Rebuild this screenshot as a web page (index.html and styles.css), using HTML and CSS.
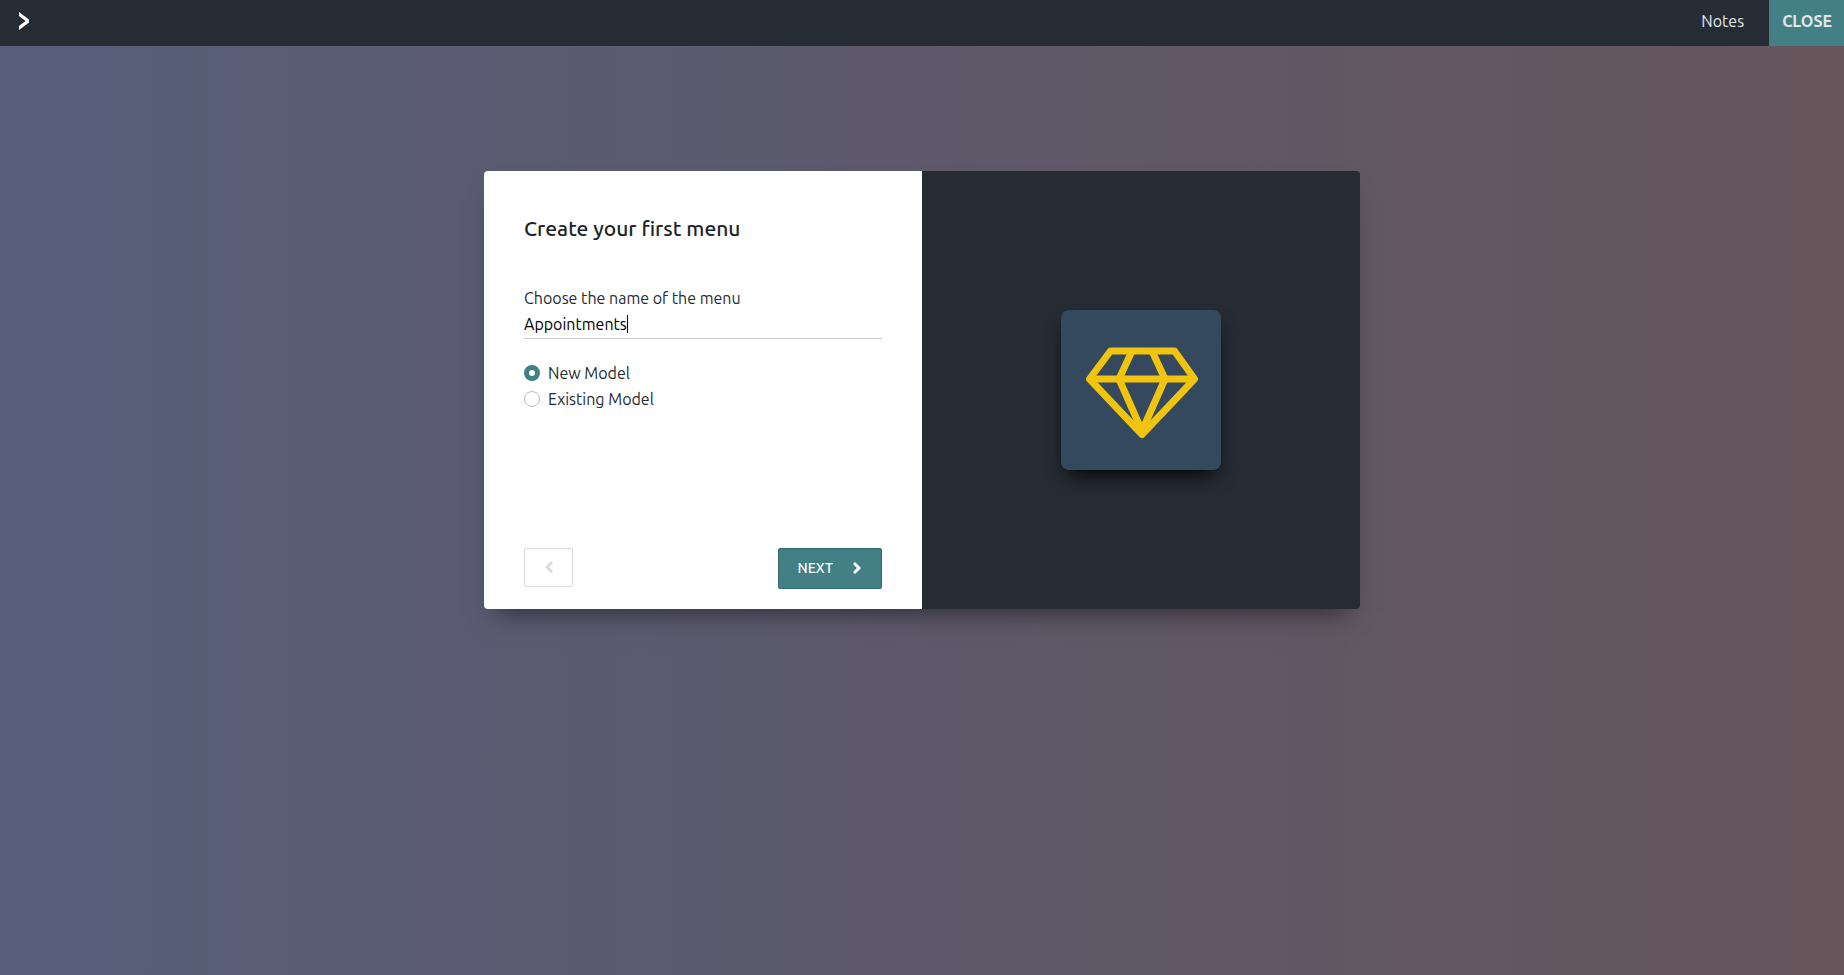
FILE: index.html
```html
<!DOCTYPE html>
<html lang="en">
<head>
    <meta charset="UTF-8">
    <meta name="viewport" content="width=device-width, initial-scale=1.0">
    <title>Create your first menu</title>
    <link rel="stylesheet" href="styles.css">
</head>
<body>
    <header class="navbar">
        <button type="button" class="menu-toggle" aria-label="Menu">
            <svg width="12" height="18" viewBox="0 0 12 18">
                <path d="M1 0 L11 7.5 V10.5 L1 18 V14 L7.6 9 L1 4 Z"/>
            </svg>
        </button>
        <nav class="navbar-right">
            <a href="#notes" class="nav-link">Notes</a>
            <button type="button" class="close-btn">CLOSE</button>
        </nav>
    </header>

    <main>
        <div class="dialog">
            <form class="dialog-left">
                <h1>Create your first menu</h1>
                <div class="field">
                    <label for="menuName">Choose the name of the menu</label>
                    <div class="field-input">
                        <input type="text" id="menuName" value="Appointments" autocomplete="off" spellcheck="false">
                        <span class="caret"></span>
                    </div>
                </div>
                <div class="radios">
                    <div class="radio">
                        <input type="radio" id="newModel" name="model" checked>
                        <label for="newModel">New Model</label>
                    </div>
                    <div class="radio">
                        <input type="radio" id="existingModel" name="model">
                        <label for="existingModel">Existing Model</label>
                    </div>
                </div>
                <div class="dialog-footer">
                    <button type="button" class="btn btn-prev" aria-label="Previous">
                        <svg width="8" height="12" viewBox="0 0 8 12">
                            <path d="M6 0 L8 2 L4 6 L8 10 L6 12 L0 6 Z"/>
                        </svg>
                    </button>
                    <button type="button" class="btn btn-next">
                        NEXT
                        <svg width="8" height="12" viewBox="0 0 8 12">
                            <path d="M2 0 L8 6 L2 12 L0 10 L4 6 L0 2 Z"/>
                        </svg>
                    </button>
                </div>
            </form>
            <div class="dialog-right">
                <div class="app-icon">
                    <svg width="112" height="92" viewBox="0 0 112 92">
                        <path d="M24.5 4 H88.5 L108.5 32 L56 87.5 L3.5 32 Z"/>
                        <path d="M3.5 32 H108.5"/>
                        <path d="M46 4 L33 32 L56 84 L79 32 L66 4"/>
                    </svg>
                </div>
            </div>
        </div>
    </main>
</body>
</html>
```

FILE: styles.css
```css
:root {
    --primary-color: #428084;
    --primary-border: #35696d;
    --dark-color: #262c34;
    --text-color: #262c34;
    --icon-background: #34495e;
    --icon-color: #f1c40f;
}

* {
    margin: 0;
    padding: 0;
    box-sizing: border-box;
}

body {
    font-family: Ubuntu, 'Noto Sans', sans-serif;
    font-size: 16px;
    line-height: 26px;
    color: var(--text-color);
    min-height: 100vh;
    display: flex;
    flex-direction: column;
    background: linear-gradient(to right, #575e7a, #5e596a 52%, #66555b);
}

button,
input {
    font: inherit;
}

button {
    border: none;
    cursor: pointer;
}

/* Navbar */
.navbar {
    display: flex;
    justify-content: space-between;
    height: 46px;
    background: var(--dark-color);
}

.menu-toggle {
    background: none;
    padding: 0 18px 4px;
    display: flex;
    align-items: center;
}

.menu-toggle svg {
    fill: white;
}

.navbar-right {
    display: flex;
}

.nav-link {
    color: #e4e5e6;
    text-decoration: none;
    padding: 8px 25px;
}

.close-btn {
    background: var(--primary-color);
    color: #e4e5e6;
    font-weight: 700;
    padding: 0 12px 4px 13px;
}

/* Dialog */
main {
    flex: 1;
    padding: 125px 20px;
}

.dialog {
    display: grid;
    grid-template-columns: 1fr 1fr;
    max-width: 876px;
    min-height: 438px;
    margin: 0 auto;
    border-radius: 4px;
    overflow: hidden;
    box-shadow: 0 16px 24px -12px rgba(0, 0, 0, 0.5);
}

.dialog-left {
    background: white;
    padding: 40px 40px 20px;
    display: flex;
    flex-direction: column;
}

h1 {
    font-size: 21px;
    line-height: 34px;
    font-weight: 500;
    color: #212529;
    margin-bottom: 40px;
}

.field {
    margin-bottom: 21px;
}

.field label {
    display: block;
}

.field-input {
    display: flex;
    align-items: center;
    border-bottom: 1px solid #c8c8c8;
    height: 28px;
    padding-bottom: 2px;
}

.field-input input {
    field-sizing: content;
    border: none;
    outline: none;
    background: none;
    color: black;
}

.caret {
    width: 1px;
    height: 18px;
    background: black;
}

.radio {
    display: flex;
    align-items: center;
    gap: 8px;
}

.radio input {
    appearance: none;
    width: 16px;
    height: 16px;
    border: 1px solid #bbb;
    border-radius: 50%;
    background: white;
}

.radio input:checked {
    border: 5px solid var(--primary-color);
}

.dialog-footer {
    display: flex;
    justify-content: space-between;
    align-items: flex-start;
    margin-top: auto;
}

.btn {
    display: flex;
    align-items: center;
    border-radius: 2px;
    font-size: 14px;
    font-weight: 500;
    padding-bottom: 2px;
}

.btn svg {
    fill: currentColor;
}

.btn-prev {
    height: 39px;
    padding-left: 20px;
    padding-right: 19px;
    background: white;
    border: 1px solid #dadada;
    color: #dadada;
}

.btn-next {
    height: 41px;
    padding-left: 18px;
    padding-right: 20px;
    gap: 20px;
    background: var(--primary-color);
    border: 1px solid var(--primary-border);
    color: white;
}

.dialog-right {
    background: var(--dark-color);
    display: flex;
    align-items: center;
    justify-content: center;
}

.app-icon {
    width: 160px;
    height: 160px;
    padding: 5px 0 0 2px;
    display: flex;
    align-items: center;
    justify-content: center;
    border-radius: 8px;
    background: var(--icon-background);
    box-shadow: 0 10px 20px -6px black;
}

.app-icon svg {
    fill: none;
    stroke: var(--icon-color);
    stroke-width: 7;
    stroke-linejoin: round;
}
```
